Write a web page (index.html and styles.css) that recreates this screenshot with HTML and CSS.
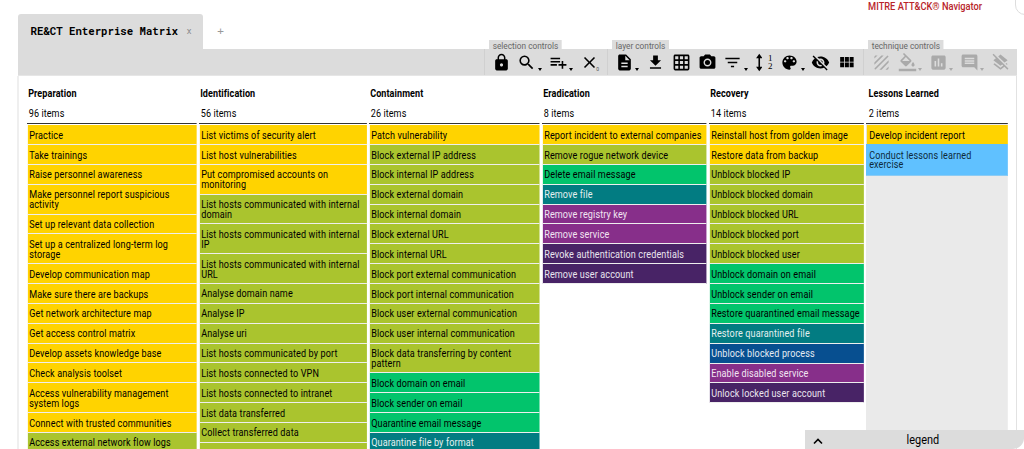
FILE: index.html
```html
<!DOCTYPE html>
<html lang="en">
<head>
<meta charset="utf-8">
<title>RE&amp;CT Enterprise Matrix</title>
<link rel="stylesheet" href="styles.css">
</head>
<body>
<div class="page">
  <header class="top">
    <div class="tab"><span class="tab-name">RE&amp;CT Enterprise Matrix</span><span class="tab-close">x</span></div>
    <span class="tab-add">+</span>
    <a class="nav-link">MITRE ATT&amp;CK® Navigator</a>
  </header>
  <div class="corner"></div>

  <nav class="toolbar">
    <div class="group selection">
      <span class="group-label">selection controls</span>
      <span class="tool"><svg viewBox="0 0 24 24"><path d="M18 8h-1V6c0-2.76-2.24-5-5-5S7 3.24 7 6v2H6c-1.1 0-2 .9-2 2v10c0 1.1.9 2 2 2h12c1.1 0 2-.9 2-2V10c0-1.1-.9-2-2-2zm-6 9c-1.1 0-2-.9-2-2s.9-2 2-2 2 .9 2 2-.9 2-2 2zm3.1-9H8.9V6c0-1.71 1.39-3.1 3.1-3.1s3.1 1.39 3.1 3.1v2z"/></svg></span>
      <span class="tool menu"><svg viewBox="0 0 24 24"><path d="M15.5 14h-.79l-.28-.27A6.47 6.47 0 0 0 16 9.5 6.5 6.5 0 1 0 9.5 16c1.61 0 3.09-.59 4.23-1.57l.27.28v.79l5 4.99L20.49 19l-4.99-5zm-6 0C7.01 14 5 11.99 5 9.5S7.01 5 9.5 5 14 7.01 14 9.5 11.99 14 9.5 14z"/></svg></span>
      <span class="tool menu"><svg viewBox="0 0 24 24"><path d="M14 10H2v2h12v-2zm0-4H2v2h12V6zm4 8v-4h-2v4h-4v2h4v4h2v-4h4v-2h-4zM2 16h8v-2H2v2z"/></svg></span>
      <span class="tool"><svg viewBox="0 0 24 24"><path d="M19 6.41L17.59 5 12 10.59 6.41 5 5 6.41 10.59 12 5 17.59 6.41 19 12 13.41 17.59 19 19 17.59 13.41 12z"/></svg><small class="count">0</small></span>
    </div>
    <div class="group layer">
      <span class="group-label">layer controls</span>
      <span class="tool menu"><svg viewBox="0 0 24 24"><path d="M14 2H6c-1.1 0-2 .9-2 2v16c0 1.1.9 2 2 2h12c1.1 0 2-.9 2-2V8l-6-6zm2 16H8v-2h8v2zm0-4H8v-2h8v2zm-3-5V3.500L18.500 9H13z"/></svg></span>
      <span class="tool"><svg viewBox="0 0 24 24"><path d="M19 9h-4V3H9v6H5l7 7 7-7zM5 18v2h14v-2H5z"/></svg></span>
      <span class="tool"><svg viewBox="0 0 24 24"><path d="M20 2H4c-1.100 0-2 .9-2 2v16c0 1.100.9 2 2 2h16c1.100 0 2-.9 2-2V4c0-1.100-.9-2-2-2zM8 20H4v-4h4v4zm0-6H4v-4h4v4zm0-6H4V4h4v4zm6 12h-4v-4h4v4zm0-6h-4v-4h4v4zm0-6h-4V4h4v4zm6 12h-4v-4h4v4zm0-6h-4v-4h4v4zm0-6h-4V4h4v4z"/></svg></span>
      <span class="tool"><svg viewBox="0 0 24 24"><circle cx="12" cy="12" r="3.200"/><path d="M9 2L7.170 4H4c-1.100 0-2 .9-2 2v12c0 1.100.9 2 2 2h16c1.100 0 2-.9 2-2V6c0-1.100-.9-2-2-2h-3.170L15 2H9zm3 15c-2.760 0-5-2.240-5-5s2.240-5 5-5 5 2.240 5 5-2.240 5-5 5z"/></svg></span>
      <span class="tool menu"><svg viewBox="0 0 24 24"><path d="M10 18h4v-2h-4v2zM3 6v2h18V6H3zm3 7h12v-2H6v2z"/></svg></span>
      <span class="tool sort"><svg class="arrow" viewBox="0 0 8 24"><path d="M4 1L8 6.500H5v11H8L4 23 0 17.500H3v-11H0z"/></svg><span class="digits"><i>1</i><i>2</i></span></span>
      <span class="tool menu"><svg viewBox="0 0 24 24"><path d="M12 3c-4.970 0-9 4.030-9 9s4.030 9 9 9c.83 0 1.500-.67 1.500-1.500 0-.39-.15-.74-.39-1.010-.23-.26-.38-.61-.38-.99 0-.83.67-1.500 1.500-1.500H16c2.760 0 5-2.240 5-5 0-4.420-4.030-8-9-8zm-5.500 9c-.83 0-1.500-.67-1.500-1.500S5.670 9 6.500 9 8 9.670 8 10.500 7.330 12 6.500 12zm3-4C8.670 8 8 7.330 8 6.500S8.670 5 9.500 5s1.500.67 1.500 1.500S10.330 8 9.500 8zm5 0c-.83 0-1.500-.67-1.500-1.500S13.670 5 14.500 5s1.500.67 1.500 1.500S15.330 8 14.500 8zm3 4c-.83 0-1.500-.67-1.500-1.500S16.670 9 17.500 9s1.500.67 1.500 1.500-.67 1.500-1.500 1.500z"/></svg></span>
      <span class="tool"><svg viewBox="0 0 24 24"><path d="M12 7c2.760 0 5 2.240 5 5 0 .65-.13 1.260-.36 1.830l2.920 2.920c1.510-1.260 2.700-2.890 3.430-4.750-1.730-4.390-6-7.500-11-7.500-1.400 0-2.740.25-3.980.7l2.160 2.160C10.740 7.130 11.350 7 12 7zM2 4.270l2.280 2.280.46.46C3.080 8.300 1.780 10.020 1 12c1.730 4.390 6 7.500 11 7.500 1.550 0 3.030-.3 4.380-.84l.42.42L19.730 22 21 20.730 3.270 3 2 4.270zM7.530 9.800l1.550 1.550c-.05.21-.08.43-.08.65 0 1.660 1.340 3 3 3 .22 0 .44-.03.65-.08l1.550 1.550c-.67.33-1.410.53-2.200.53-2.760 0-5-2.240-5-5 0-.79.2-1.530.53-2.200zm4.310-.78l3.150 3.150.02-.16c0-1.660-1.340-3-3-3l-.17.01z"/></svg></span>
      <span class="tool"><svg viewBox="0 0 24 24"><path d="M4 11h5V5H4v6zm0 7h5v-6H4v6zm6 0h5v-6h-5v6zm6 0h5v-6h-5v6zm-6-7h5V5h-5v6zm6-6v6h5V5h-5z"/></svg></span>
    </div>
    <div class="group technique">
      <span class="group-label">technique controls</span>
      <span class="tool"><svg viewBox="0 0 24 24"><path d="M19.510 3.080L3.080 19.510c.09.34.27.65.51.9.25.24.56.42.9.51L20.930 4.490c-.19-.69-.73-1.230-1.420-1.410zM11.880 3L3 11.880v2.830L14.710 3h-2.830zM5 3c-1.100 0-2 .9-2 2v2l4-4H5zm14 18c.55 0 1.050-.22 1.410-.59.37-.36.59-.86.59-1.410v-2l-4 4h2zm-9.710 0h2.830L21 12.120V9.290L9.290 21z"/></svg></span>
      <span class="tool menu"><svg viewBox="0 0 24 24"><path d="M16.560 8.940L7.620 0 6.210 1.410l2.380 2.380-5.150 5.150c-.59.59-.59 1.540 0 2.120l5.500 5.500c.29.29.68.44 1.060.44s.77-.15 1.060-.44l5.500-5.500c.59-.58.59-1.530 0-2.120zM5.210 10L10 5.210 14.790 10H5.210zM19 11.500s-2 2.170-2 3.500c0 1.100.9 2 2 2s2-.9 2-2c0-1.330-2-3.500-2-3.500zM1 20h22v3H1z"/></svg></span>
      <span class="tool menu"><svg viewBox="0 0 24 24"><path d="M19 3H5c-1.100 0-2 .9-2 2v14c0 1.100.9 2 2 2h14c1.100 0 2-.9 2-2V5c0-1.100-.9-2-2-2zM9 17H7v-7h2v7zm4 0h-2V7h2v10zm4 0h-2v-4h2v4z"/></svg></span>
      <span class="tool menu"><svg viewBox="0 0 24 24"><path d="M21.990 4c0-1.100-.89-2-1.990-2H4c-1.100 0-2 .9-2 2v12c0 1.100.9 2 2 2h14l4 4-.01-18zM18 14H6v-2h12v2zm0-3H6V9h12v2zm0-3H6V6h12v2z"/></svg></span>
      <span class="tool"><svg viewBox="0 0 24 24"><path d="M19.810 14.990l1.190-.92-1.430-1.430-1.190.92 1.430 1.430zm-.45-4.720L21 9l-9-7-2.910 2.270 7.870 7.880 2.400-1.880zM3.270 1L2 2.270l4.220 4.220L3 9l1.630 1.270L12 16l2.100-1.630 1.430 1.430L12 18.540l-7.370-5.730L3 14.070l9 7 4.950-3.850L20.730 21 22 19.730 3.270 1z"/></svg></span>
    </div>
  </nav>

  <main class="matrix">
    <section class="tactic">
      <h2>Preparation</h2><p class="items">96 items</p>
      <div class="cells">
        <div class="cell y">Practice</div>
        <div class="cell y">Take trainings</div>
        <div class="cell y">Raise personnel awareness</div>
        <div class="cell y">Make personnel report suspicious<br>activity</div>
        <div class="cell y">Set up relevant data collection</div>
        <div class="cell y">Set up a centralized long-term log<br>storage</div>
        <div class="cell y">Develop communication map</div>
        <div class="cell y">Make sure there are backups</div>
        <div class="cell y">Get network architecture map</div>
        <div class="cell y">Get access control matrix</div>
        <div class="cell y">Develop assets knowledge base</div>
        <div class="cell y">Check analysis toolset</div>
        <div class="cell y">Access vulnerability management<br>system logs</div>
        <div class="cell y">Connect with trusted communities</div>
        <div class="cell l">Access external network flow logs</div>
      </div>
    </section>
    <section class="tactic">
      <h2>Identification</h2><p class="items">56 items</p>
      <div class="cells">
        <div class="cell y">List victims of security alert</div>
        <div class="cell y">List host vulnerabilities</div>
        <div class="cell y">Put compromised accounts on<br>monitoring</div>
        <div class="cell l">List hosts communicated with internal<br>domain</div>
        <div class="cell l">List hosts communicated with internal<br>IP</div>
        <div class="cell l">List hosts communicated with internal<br>URL</div>
        <div class="cell l">Analyse domain name</div>
        <div class="cell l">Analyse IP</div>
        <div class="cell l">Analyse uri</div>
        <div class="cell l">List hosts communicated by port</div>
        <div class="cell l">List hosts connected to VPN</div>
        <div class="cell l">List hosts connected to intranet</div>
        <div class="cell l">List data transferred</div>
        <div class="cell l">Collect transferred data</div>
        <div class="cell l"></div>
      </div>
    </section>
    <section class="tactic">
      <h2>Containment</h2><p class="items">26 items</p>
      <div class="cells">
        <div class="cell y">Patch vulnerability</div>
        <div class="cell l">Block external IP address</div>
        <div class="cell l">Block internal IP address</div>
        <div class="cell l">Block external domain</div>
        <div class="cell l">Block internal domain</div>
        <div class="cell l">Block external URL</div>
        <div class="cell l">Block internal URL</div>
        <div class="cell l">Block port external communication</div>
        <div class="cell l">Block port internal communication</div>
        <div class="cell l">Block user external communication</div>
        <div class="cell l">Block user internal communication</div>
        <div class="cell l">Block data transferring by content<br>pattern</div>
        <div class="cell g">Block domain on email</div>
        <div class="cell g">Block sender on email</div>
        <div class="cell g">Quarantine email message</div>
        <div class="cell t">Quarantine file by format</div>
      </div>
    </section>
    <section class="tactic">
      <h2>Eradication</h2><p class="items">8 items</p>
      <div class="cells">
        <div class="cell y">Report incident to external companies</div>
        <div class="cell l">Remove rogue network device</div>
        <div class="cell g">Delete email message</div>
        <div class="cell t">Remove file</div>
        <div class="cell p">Remove registry key</div>
        <div class="cell p">Remove service</div>
        <div class="cell v">Revoke authentication credentials</div>
        <div class="cell v">Remove user account</div>
      </div>
    </section>
    <section class="tactic">
      <h2>Recovery</h2><p class="items">14 items</p>
      <div class="cells">
        <div class="cell y">Reinstall host from golden image</div>
        <div class="cell y">Restore data from backup</div>
        <div class="cell l">Unblock blocked IP</div>
        <div class="cell l">Unblock blocked domain</div>
        <div class="cell l">Unblock blocked URL</div>
        <div class="cell l">Unblock blocked port</div>
        <div class="cell l">Unblock blocked user</div>
        <div class="cell g">Unblock domain on email</div>
        <div class="cell g">Unblock sender on email</div>
        <div class="cell g">Restore quarantined email message</div>
        <div class="cell t">Restore quarantined file</div>
        <div class="cell b">Unblock blocked process</div>
        <div class="cell p">Enable disabled service</div>
        <div class="cell v">Unlock locked user account</div>
      </div>
    </section>
    <section class="tactic active">
      <h2>Lessons Learned</h2><p class="items">2 items</p>
      <div class="cells">
        <div class="cell y">Develop incident report</div>
        <div class="cell hover">Conduct lessons learned<br>exercise</div>
      </div>
    </section>
  </main>

  <footer class="legend">
    <svg viewBox="0 0 12 8"><path d="M2 6.500L6 2.500l4 4"/></svg>
    <span>legend</span>
  </footer>
</div>
</body>
</html>
```
FILE: styles.css
```css
* { box-sizing: border-box; }
body {
  margin: 0;
  background: #fff;
  color: #000;
  font-family: Roboto, "Liberation Sans", sans-serif;
  overflow: hidden;
}
.page {
  position: relative;
  width: 1024px;
  height: 449px;
  overflow: hidden;
  display: flex;
  flex-direction: column;
}
.top {
  flex: none;
  height: 49px;
  padding: 14px 0 0 18px;
  display: flex;
}
.tab {
  width: 185px;
  height: 35px;
  padding: 0 0 2px 12.5px;
  border-radius: 3px 3px 0 0;
  background: #dcdcdc;
  display: flex;
  align-items: center;
  font-family: "Roboto Mono", "DejaVu Sans Mono", monospace;
}
.tab-name {
  font-size: 10.700px;
  font-weight: bold;
  white-space: nowrap;
}
.tab-close { margin-left: 8.5px; font-size: 8.5px; color: #888; }
.tab-add {
  width: 35px;
  padding-top: 10px;
  text-align: center;
  font: 11px/15px "DejaVu Sans Mono", monospace;
  color: #999;
}
.nav-link {
  margin: -14px 41.5px 0 auto;
  font-size: 10.400px;
  line-height: 13px;
  font-weight: 500;
  color: #b8242a;
  transform: scaleX(.89);
  transform-origin: right;
}
.corner {
  position: absolute;
  left: 1015px;
  top: -10px;
  width: 30px;
  height: 25px;
  border: 1px solid #ddd;
  border-radius: 10px;
}

/* toolbar */
.toolbar {
  flex: none;
  height: 27px;
  margin: 0 7px 0 18px;
  background: #dcdcdc;
  border-bottom: 1px solid #e6e6e6;
  display: flex;
  justify-content: flex-end;
}
.group {
  position: relative;
  display: flex;
  align-items: center;
  padding: 0 3.6px 0 3px;
  border-left: 1px solid #d0d0d0;
}
.group-label {
  position: absolute;
  left: 4px;
  top: -9px;
  height: 11px;
  padding: 0 4px;
  background: #dcdcdc;
  color: #666;
  font-size: 9px;
  line-height: 12px;
  white-space: nowrap;
  transform: scaleX(.92);
  transform-origin: left;
}
.tool {
  position: relative;
  width: 25.8px;
  height: 26px;
  display: flex;
  align-items: center;
  justify-content: center;
}
.tool svg { width: 19px; height: 19px; fill: #000; }
.selection { padding-right: 4.5px; }
.layer { padding-left: 4px; }
.technique { padding-left: 4.300px; }
.technique .tool svg { fill: #aaa; }
.menu { margin-right: 5.3px; }
.menu::after {
  content: "";
  position: absolute;
  left: 23.700px;
  top: 19px;
  border: 2px solid transparent;
  border-top: 3px solid #000;
}
.technique .menu::after { border-top-color: #aaa; }
.count { position: absolute; left: 20px; top: 17px; font-size: 5px; line-height: 7px; color: #555; }
.tool.sort { gap: 6px; }
.sort .arrow { width: 6.5px; height: 19px; }
.digits {
  display: flex;
  flex-direction: column;
  font: 9px/8.5px "Liberation Serif", serif;
}
.digits i { font-style: normal; }

/* matrix */
.matrix {
  flex: 1;
  min-height: 0;
  margin: 0 7px 0 17px;
  padding: 10px 0 0 8px;
  border-left: 2px solid #efefef;
  border-right: 1px solid #e2e2e2;
  display: grid;
  grid-template-columns: 170px 167.500px 170.500px 164.500px 154.500px 142px;
  column-gap: 2.400px;
}
/* condensed lettering: columns are laid out wider, then narrowed to the track */
.tactic {
  --condense: .87;
  display: flex;
  flex-direction: column;
  width: calc(100% / var(--condense));
  min-width: 0;
  transform: scaleX(var(--condense));
  transform-origin: left;
}
.tactic h2 {
  margin: 0;
  padding-left: 1.3px;
  font-size: 10.400px;
  line-height: 16px;
  font-weight: 700;
  letter-spacing: .1px;
}
.items {
  margin: 4px 0 0;
  padding-left: 2px;
  height: 18.200px;
  font-size: 10.400px;
  line-height: 16px;
  letter-spacing: .1px;
  border-bottom: 1px solid #333;
}
.cells { flex: 1; padding: 1px 0 0 1px; }
.cell {
  min-height: 19.860px;
  padding: 5.500px 0 3.400px 1.500px;
  border-bottom: 1px solid #eee;
  font-size: 10.400px;
  line-height: 9.930px;
  letter-spacing: .15px;
  white-space: nowrap;
}
.y { background: #ffd300; }
.l { background: #aac42e; }
.g { background: #02c46c; }
.t { background: #027c82; color: #e4f0f0; }
.b { background: #074f90; color: #e4ebf3; }
.p { background: #872f8a; color: #f2e5f2; }
.v { background: #482366; color: #eae5ee; }
.active h2 { padding-left: 3px; }
.active .items { padding-left: 3.300px; }
.active .cells { background: #eaeaea; }
.active .cell { padding-left: 2.600px; }
.active .hover {
  margin: -1px 0 0 -1px;
  padding: 6.500px 0 4.500px 3.600px;
  background: #60c1ff;
  border-bottom: 1px solid #8ccbf3;
  color: #0d2a3a;
}

.legend {
  position: absolute;
  left: 805px;
  bottom: 0;
  width: 219px;
  height: 19px;
  background: #dcdcdc;
  border-bottom-right-radius: 11px;
  font-size: 12px;
  line-height: 20px;
  text-align: center;
}
.legend span { display: inline-block; margin-left: 17px; transform: scaleX(.91); }
.legend svg {
  position: absolute;
  left: 6.500px;
  top: 7px;
  width: 12px;
  height: 8px;
  fill: none;
  stroke: #000;
  stroke-width: 1.600;
}
```
